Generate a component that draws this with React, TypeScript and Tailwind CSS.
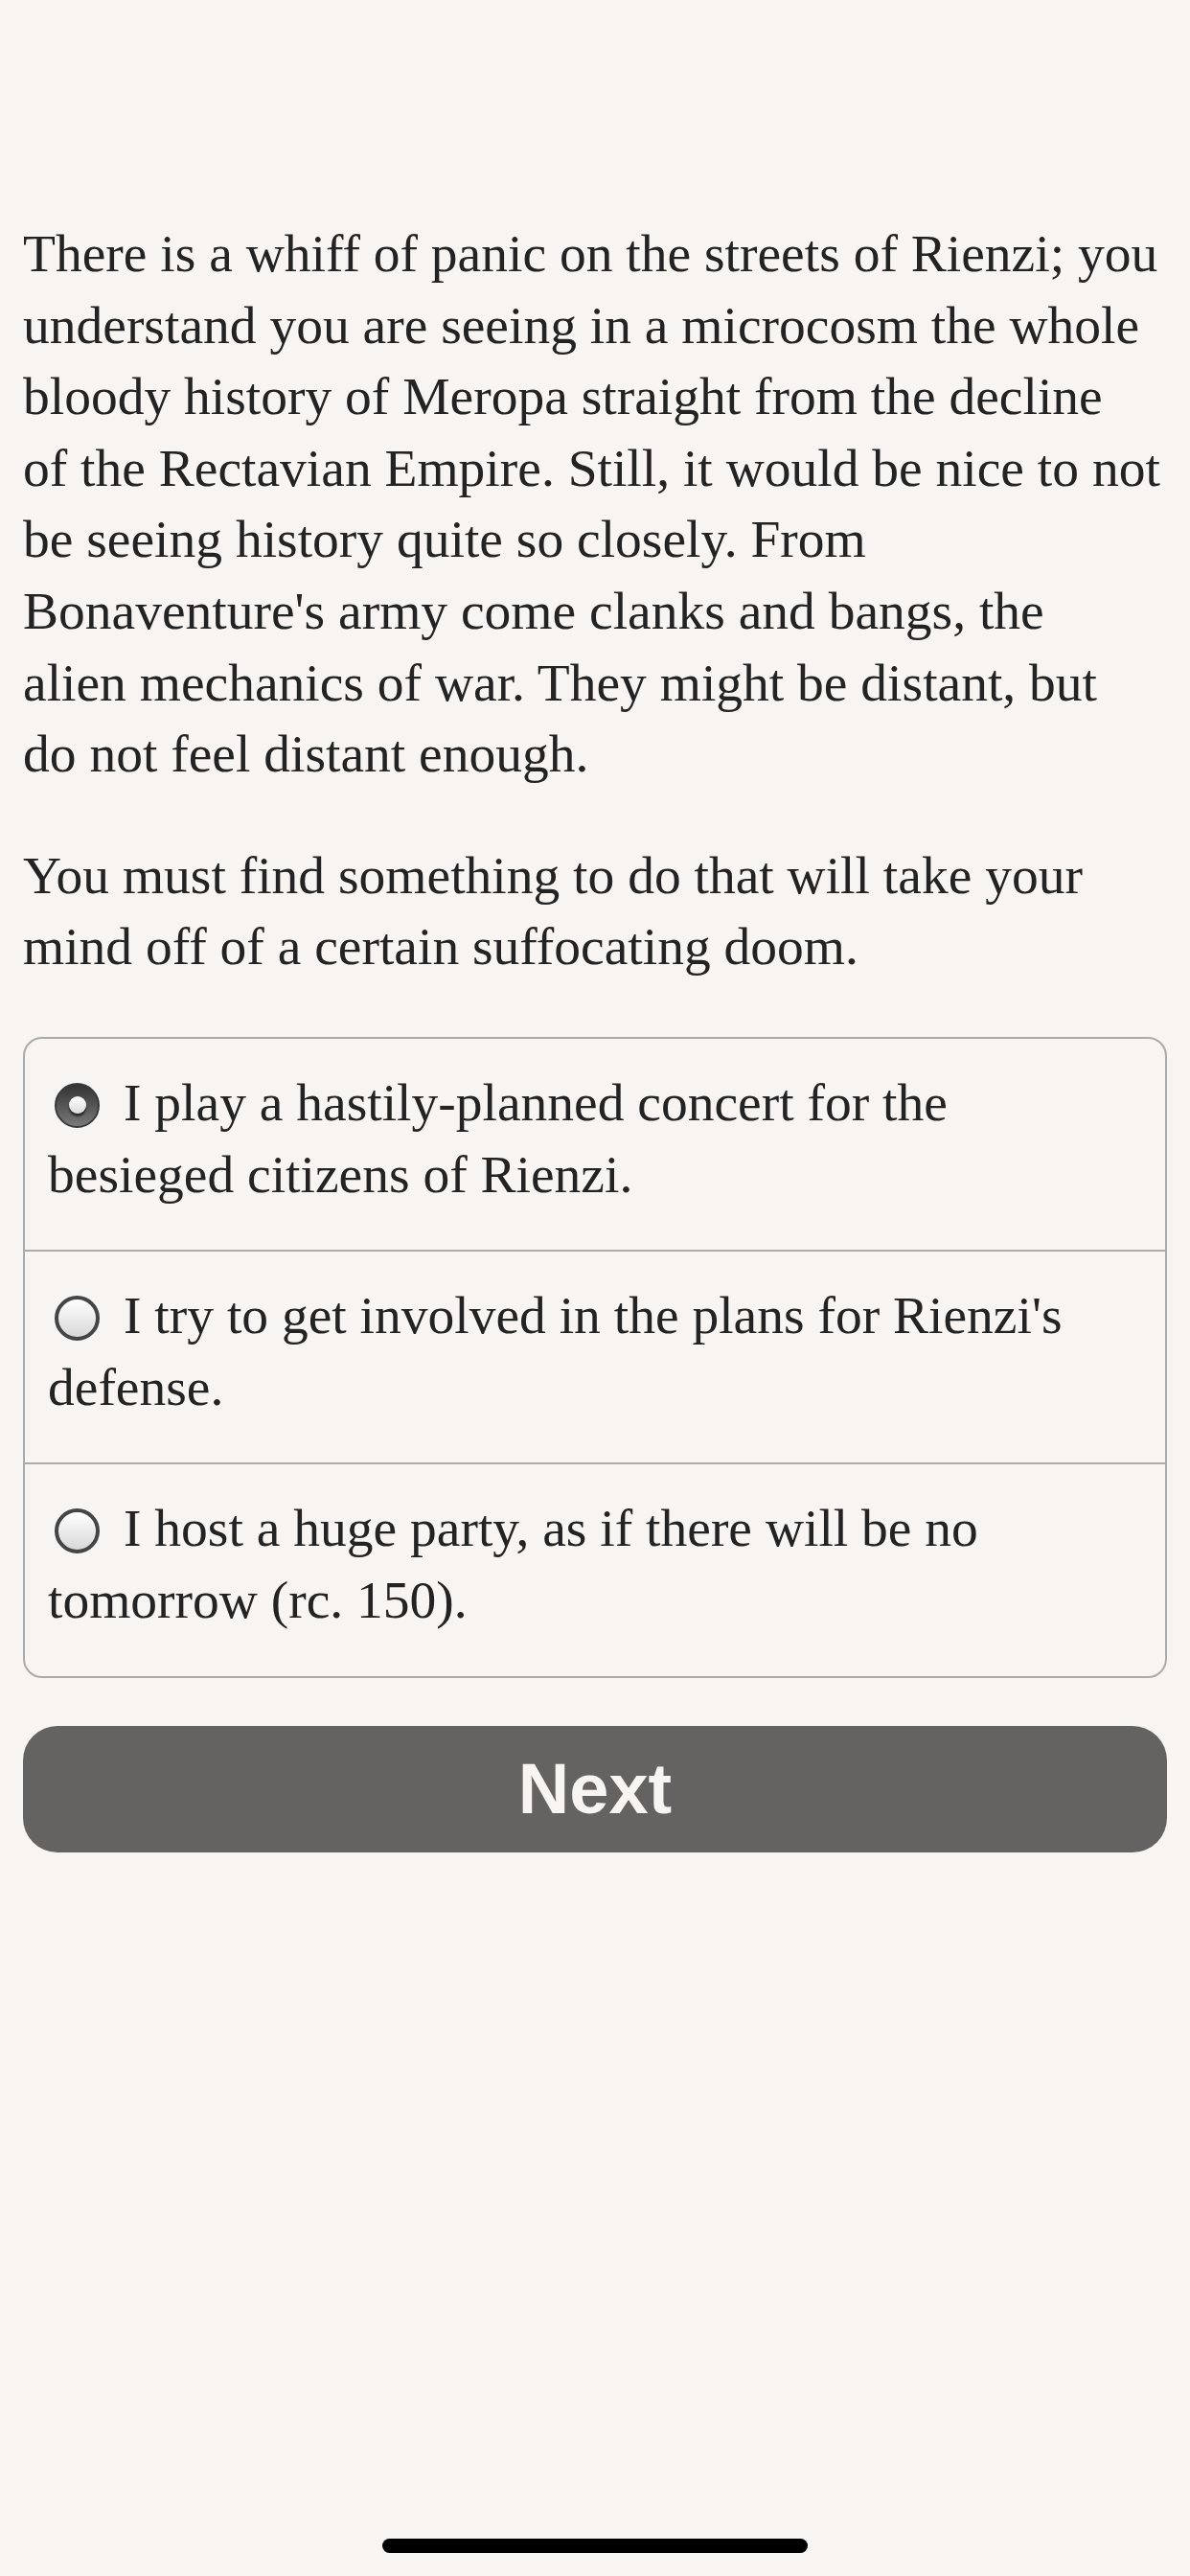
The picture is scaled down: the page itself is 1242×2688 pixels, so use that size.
import { useState } from "react";

const choices = [
  ["I play a hastily-planned concert for the", "besieged citizens of Rienzi."],
  ["I try to get involved in the plans for Rienzi's", "defense."],
  ["I host a huge party, as if there will be no", "tomorrow (rc. 150)."],
];

const para1 = [
  "There is a whiff of panic on the streets of Rienzi; you",
  "understand you are seeing in a microcosm the whole",
  "bloody history of Meropa straight from the decline",
  "of the Rectavian Empire. Still, it would be nice to not",
  "be seeing history quite so closely. From",
  "Bonaventure's army come clanks and bangs, the",
  "alien mechanics of war. They might be distant, but",
  "do not feel distant enough.",
];

const para2 = [
  "You must find something to do that will take your",
  "mind off of a certain suffocating doom.",
];

function Radio({ checked }: { checked: boolean }) {
  if (checked) {
    return (
      <span className="inline-flex items-center justify-center w-[47px] h-[47px] rounded-full bg-gradient-to-b from-[#333] to-[#7a7a7a] border-[2px] border-[#3a3a3a] align-middle ml-[7px] mr-[25px] -mt-[6px]">
        <span className="block w-[18px] h-[18px] rounded-full bg-gradient-to-b from-white to-[#dcdcdc] shadow-[0_3px_2px_rgba(0,0,0,0.6)]" />
      </span>
    );
  }
  return (
    <span className="inline-block w-[47px] h-[47px] rounded-full bg-gradient-to-b from-white to-[#d8d8d8] border-[4px] border-[#454545] align-middle ml-[7px] mr-[25px] -mt-[6px]" />
  );
}

export default function App() {
  const [selected, setSelected] = useState(0);

  return (
    <div
      className="min-h-[2688px] w-[1242px] bg-[#f7f4f1] text-[#232323] flex flex-col"
      style={{ fontFamily: '"Liberation Serif", "DejaVu Serif", serif' }}
    >
      <div className="px-[24px] pt-[228px]">
        <p className="text-[55.5px] leading-[74.6px] mb-[52px]">
          {para1.map((l, i) => (
            <span key={i} className="block whitespace-nowrap">{l}</span>
          ))}
        </p>
        <p className="text-[55.5px] leading-[74.6px]">
          {para2.map((l, i) => (
            <span key={i} className="block whitespace-nowrap">{l}</span>
          ))}
        </p>

        {/* choices */}
        <div className="mt-[56px] border-[2px] border-[#a9aaab] rounded-[20px] overflow-hidden">
          {choices.map((c, i) => (
            <label
              key={i}
              onClick={() => setSelected(i)}
              className={`block pl-[24px] pr-[20px] pt-[30px] pb-[41px] text-[55.5px] leading-[74.6px] cursor-pointer ${
                i > 0 ? "border-t-[2px] border-[#a9aaab]" : ""
              }`}
            >
              <span className="block whitespace-nowrap">
                <Radio checked={selected === i} />
                {c[0]}
              </span>
              <span className="block whitespace-nowrap">{c[1]}</span>
            </label>
          ))}
        </div>

        <button
          className="mt-[50px] w-full h-[132px] rounded-[36px] bg-[#646361] text-[#f7f4f1] text-[74px] font-bold flex items-center justify-center"
          style={{ fontFamily: '"Liberation Sans", Arial, sans-serif' }}
        >
          Next
        </button>
      </div>

      <div className="flex-1" />
      <div className="flex justify-center pb-[24px]">
        <div className="w-[444px] h-[15px] rounded-full bg-black" />
      </div>
    </div>
  );
}
